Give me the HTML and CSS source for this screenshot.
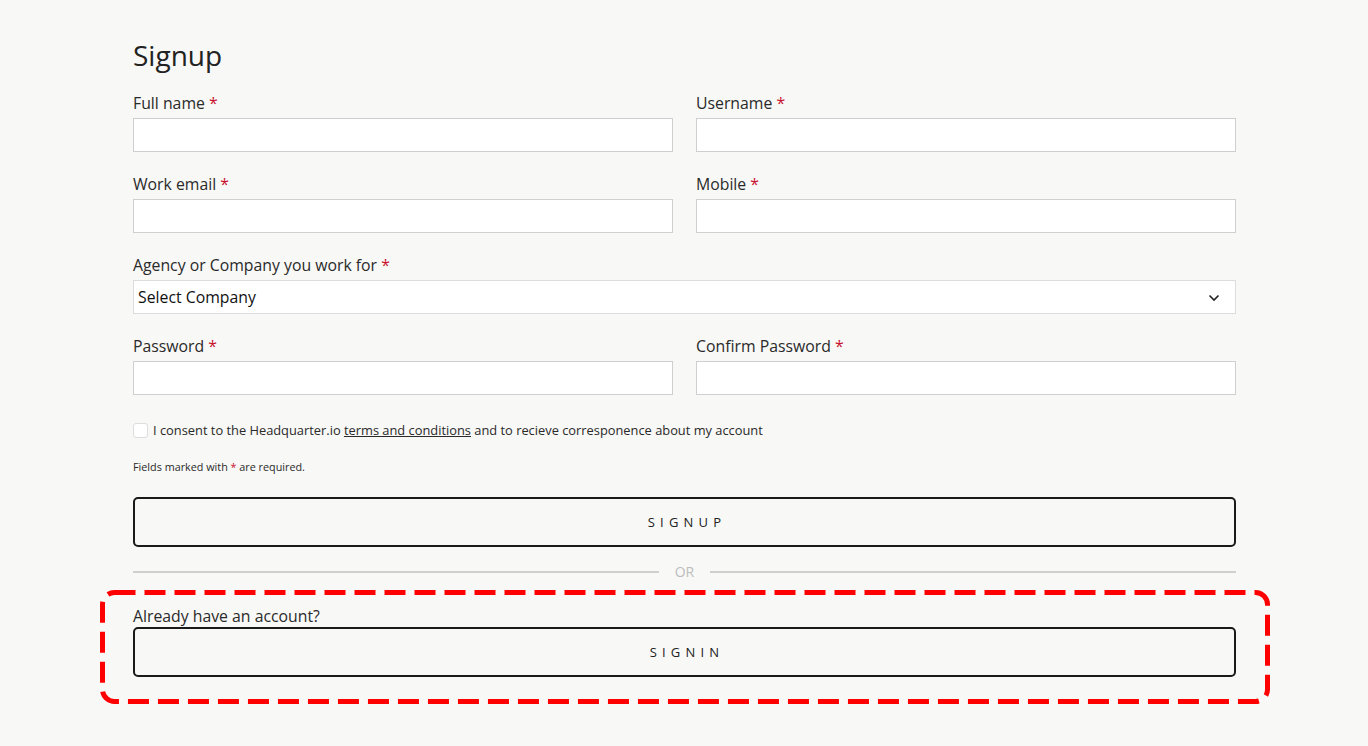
FILE: index.html
```html
<!DOCTYPE html>
<html>
<head>
<meta charset="utf-8">
<link rel="stylesheet" href="styles.css">
</head>
<body>
<main class="page">
  <h1 class="title">Signup</h1>
  <div class="grid">
    <div class="field">
      <label class="label">Full name <span class="req">*</span></label>
      <input class="input" type="text">
    </div>
    <div class="field">
      <label class="label">Username <span class="req">*</span></label>
      <input class="input" type="text">
    </div>
    <div class="field">
      <label class="label">Work email <span class="req">*</span></label>
      <input class="input" type="text">
    </div>
    <div class="field">
      <label class="label">Mobile <span class="req">*</span></label>
      <input class="input" type="text">
    </div>
    <div class="field full">
      <label class="label">Agency or Company you work for <span class="req">*</span></label>
      <div class="select">
        <span>Select Company</span>
        <svg class="chev" width="12" height="8" viewBox="0 0 12 8"><path d="M1.5 1.5 L6 6 L10.5 1.5" fill="none" stroke="#222" stroke-width="1.6"/></svg>
      </div>
    </div>
    <div class="field">
      <label class="label">Password <span class="req">*</span></label>
      <input class="input" type="password">
    </div>
    <div class="field">
      <label class="label">Confirm Password <span class="req">*</span></label>
      <input class="input" type="password">
    </div>
  </div>
  <div class="consent">
    <span class="box"></span>
    <span>I consent to the Headquarter.io <a class="link">terms and conditions</a> and to recieve corresponence about my account</span>
  </div>
  <p class="note">Fields marked with <span class="req">*</span> are required.</p>
  <button class="btn">SIGNUP</button>
  <div class="or"><span class="line"></span><span class="or-text">OR</span><span class="line"></span></div>
  <section class="signin">
    <div class="already">Already have an account?</div>
    <button class="btn btn-signin">SIGNIN</button>
    <svg class="dash" width="1170" height="114" viewBox="0 0 1170 114"><rect x="2.5" y="2.5" width="1165" height="109" rx="12" ry="12" fill="none" stroke="#ff0000" stroke-width="5" stroke-dasharray="21 9"/></svg>
  </section>
</main>
</body>
</html>
```
FILE: styles.css
```css
* { box-sizing: border-box; }
html, body { margin: 0; padding: 0; }
body {
  background: #f8f8f6;
  font-family: "Open Sans", "Liberation Sans", sans-serif;
  color: #2a2a2a;
}
.page {
  width: 1103px;
  margin-left: 133px;
  padding-top: 36px;
  padding-bottom: 60px;
}
.title {
  margin: 0 0 18px;
  font-size: 28px;
  line-height: 38px;
  font-weight: 400;
  color: #222;
}
.grid {
  display: grid;
  grid-template-columns: 540px 540px;
  column-gap: 23px;
}
.field { margin-bottom: 21px; display: flex; flex-direction: column; }
.field.full { grid-column: 1 / span 2; }
.label {
  font-size: 15.8px;
  line-height: 22px;
  margin-bottom: 4px;
  color: #2a2a2a;
}
.req { color: #c8102e; }
.input {
  height: 34px;
  border: 1px solid #cfcfcf;
  background: #fff;
  margin: 0;
  padding: 0 5px;
  font: inherit;
}
.select {
  height: 34px;
  border: 1px solid #dcdcdc;
  background: #fff;
  display: flex;
  align-items: center;
  justify-content: space-between;
  padding: 0 15px 0 4px;
  font-size: 15.8px;
  color: #111;
}
.chev { margin-top: 1px; }
.consent {
  margin-top: 4px;
  display: flex;
  align-items: center;
  gap: 5px;
  font-size: 12.85px;
  line-height: 20px;
  color: #2a2a2a;
}
.box {
  width: 15px;
  height: 15px;
  border: 1px solid #ddd;
  border-radius: 3px;
  background: #fff;
  flex: none;
}
.link { text-decoration: underline; color: #2a2a2a; }
.note {
  margin: 19px 0 0;
  font-size: 10.8px;
  line-height: 16px;
  color: #2a2a2a;
}
.btn {
  display: block;
  width: 100%;
  height: 50px;
  margin: 22px 0 0;
  border: 2px solid #1a1a1a;
  border-radius: 5px;
  background: #f8f8f6;
  font-family: "Open Sans", "Liberation Sans", sans-serif;
  font-size: 13px;
  letter-spacing: 5.2px;
  padding: 0 0 0 5px;
  color: #222;
}
.or {
  margin-top: 15px;
  height: 20px;
  display: flex;
  align-items: center;
  gap: 16px;
}
.line { flex: 1; height: 2px; background: #cfcfcf; }
.or-text { font-size: 14px; color: #bdbdbd; line-height: 20px; }
.signin {
  position: relative;
  margin-top: 23px;
}
.already {
  font-size: 15.8px;
  line-height: 22px;
  color: #2a2a2a;
}
.btn-signin { margin-top: 0; }
.dash {
  position: absolute;
  left: -33px;
  top: -15px;
  pointer-events: none;
}
```
